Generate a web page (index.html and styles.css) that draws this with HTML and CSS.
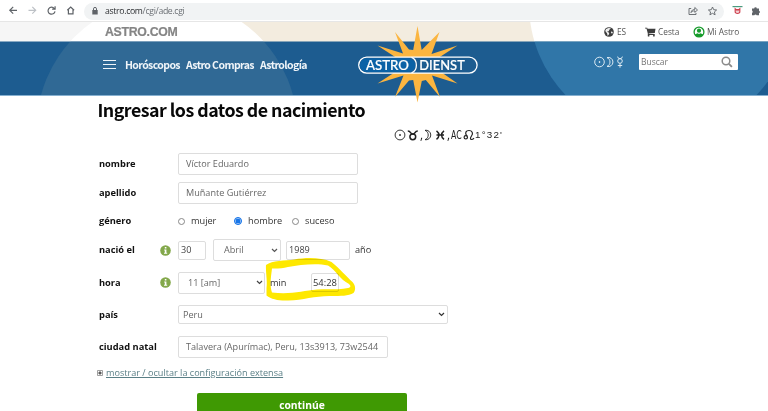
FILE: index.html
```html
<!DOCTYPE html>
<html lang="es">
<head>
<meta charset="utf-8">
<title>Astrodienst</title>
<link rel="stylesheet" href="styles.css">
</head>
<body>
<div class="browser">
  <svg class="b-nav" width="84" height="21" viewBox="0 0 84 21" fill="none" stroke="#5f6368" stroke-width="1.2">
    <path d="M17 10.3H9.8M13.2 6.9 9.8 10.3l3.4 3.4"/>
    <path stroke="#bdc1c6" d="M28.500 10.300h7.200M32.300 6.900l3.400 3.400-3.400 3.400"/>
    <path d="M54.300 8.500A3.500 3.500 0 1 0 55 11.300M55.100 6.300v2.900h-3"/>
    <path d="M67.300 10.200 70.700 7l3.400 3.200M68.400 9.500v4.300h4.600V9.500"/>
  </svg>
  <div class="address">
    <svg class="lock" width="6" height="8" viewBox="0 0 6 8"><path d="M.3 3h5.400v4.500H.3z" fill="#5f6368"/><path d="M1.500 3V1.900a1.500 1.500 0 0 1 3 0V3" fill="none" stroke="#5f6368"/></svg>
    <span class="url">astro.com<i>/cgi/ade.cgi</i></span>
    <svg class="addr-icons" width="30" height="12" viewBox="0 0 30 12" fill="none" stroke="#5f6368" stroke-width=".9">
      <path d="M3.200 3.500H1v6h7V8M3 7.600c.5-2.500 2-3.200 3.800-3.200V2.500L9.500 5 6.800 7.400V5.800C5 5.800 4 6.400 3 7.600z"/>
      <path d="m24.500 2 1.200 2.700 2.900.3-2.200 1.900.7 2.900-2.600-1.500-2.600 1.500.7-2.900-2.200-1.900 2.900-.3z"/>
    </svg>
  </div>
  <svg width="30" height="12" viewBox="0 0 30 12">
    <path d="M.5 1h10v1.200H.5z" fill="#4a9b7f"/>
    <path d="M3.200 3.700v3.100q0 1.500 2.300 1.500t2.300-1.500V3.700l-1.100.9H4.300z" fill="none" stroke="#cf4250" stroke-width="1.200"/><path d="M4 5.800h3" stroke="#cf4250" stroke-width=".8"/>
    <path d="M20 3.500h2.200a1.300 1.300 0 0 1 2.600 0H27v2.300a1.300 1.300 0 0 1 0 2.500v1.900h-2.300a1.300 1.300 0 0 0-2.400 0H20V8a1.400 1.400 0 0 0 0-2.400z" fill="#5f6368"/>
  </svg>
</div>

<header class="header">
  <svg class="backdrop" width="768" height="75" viewBox="0 21 768 75">
    <path d="M0 21h768v21H0z" fill="#f3ecdf"/><path d="M0 21h167v21H0z" fill="#f6f6f6"/>
    <path d="M0 41.500h768V96H0z" fill="#1d5c90"/>
    <clipPath id="top"><path d="M0 21h768v20.500H0z"/></clipPath>
    <clipPath id="bar"><path d="M0 41.500h768V96H0z"/></clipPath>
    <g clip-path="url(#top)" fill="#fff"><circle cx="167" cy="129" r="130.500"/><circle cx="661" cy="4" r="132"/></g>
    <g clip-path="url(#bar)"><circle cx="167" cy="129" r="130.500" fill="#306995"/><circle cx="661" cy="4" r="132" fill="#3076a8"/></g>
    <path d="M0 95h768v1H0z" fill="#86b0d0"/><path d="M0 21h768v1H0z" fill="#e6e6e6"/>
  </svg>
  <div class="topbar">
    <strong class="brand">ASTRO.COM</strong>
    <div class="top-item lang">
      <svg width="10" height="10" viewBox="0 0 10 10"><circle cx="5" cy="5" r="4.800" fill="#3d3d3d"/><path d="M4.600.900 7 1.200 5.500 2.500 4.700 4.200 3 4.500l2 1.200.2 1.200L3.700 9 3 6.300 1.200 4l.9-1.900zM7.500 4.300l1.400.9-.8 1.500-1.200-.9z" fill="#eee"/></svg>
      <span>ES</span>
    </div>
    <div class="top-item cart">
      <svg width="11" height="10" viewBox="0 0 11 10"><path d="M0 .7h2.200l.3 1h8L9.800 6 3.700 6.500v.6h6v.9H2.800V6.500L1.500 1.600H0z" fill="#3d3d3d"/><circle cx="3.600" cy="8.700" r=".9" fill="#3d3d3d"/><circle cx="8.900" cy="8.700" r=".9" fill="#3d3d3d"/></svg>
      <span>Cesta</span>
    </div>
    <div class="top-item user">
      <svg width="12" height="12" viewBox="0 0 12 12"><clipPath id="u"><circle cx="6" cy="6" r="5"/></clipPath><circle cx="6" cy="6" r="4.900" fill="#fff" stroke="#169b2b" stroke-width="1.300"/><g clip-path="url(#u)" fill="#169b2b"><circle cx="6" cy="4.700" r="2.100"/><path d="M1 12c0-3 1.800-4.300 3.500-4.700L6 8l1.500-.7C9.200 7.700 11 9 11 12z"/></g></svg>
      <span>Mi Astro</span>
    </div>
  </div>
  <nav class="nav">
    <div class="burger"><b></b><b></b><b></b></div>
    <a class="n1">Horóscopos</a><a class="n2">Astro Compras</a><a class="n3">Astrología</a>
    <svg class="signs" width="30" height="14" viewBox="0 0 30 14" fill="none" stroke="#e3eef6" stroke-width=".95">
      <circle cx="5.500" cy="7" r="4.800"/><circle cx="5.500" cy="7" r=".5" fill="#fff"/>
      <path d="M13 2.600a4.600 4.600 0 1 1 0 8.800c4-1.500 4-7.300 0-8.800z"/>
      <circle cx="26" cy="6" r="2.300"/><path d="M23.600 1.600q.3 2.100 2.400 2.100t2.400-2.100M26 8.300v4.400M23.800 10.500h4.400"/>
    </svg>
    <div class="search"><span>Buscar</span><svg width="12" height="12" viewBox="0 0 12 12" fill="none" stroke="#8b8b8b"><circle cx="5" cy="5" r="3.800" stroke-width="1.500"/><path d="m7.900 7.900 3 3" stroke-width="1.900"/></svg></div>
  </nav>
  <svg class="logo" width="122" height="80" viewBox="357 25 122 80">
    <path fill="#fbb540" d="M417.500 26l4.200 24L439.500 32l-8 22 26-8.500-20 13v11l20 14-25.500-8L440 97l-14.200-17-4 1-4.300 21.500L413.200 80l-4.200.500L395 97l8.500-21.500-26 8 20-13v-12l-20-13 25.500 8L395 32l14 17.500 4.200.5z"/>
    <rect x="358.700" y="57.100" width="118.400" height="16" rx="8" fill="#1d5c90" stroke="#fff" stroke-width="1.300"/>
    <path d="M366.700 58.300h42q6.500 1.700 6.500 6.900t-6.500 6.900h-42a6.900 6.900 0 0 1 0-13.800z" fill="#0b62a6"/>
    <path d="M411.500 57.400c6.500 2.500 6.500 13 0 15.400" fill="none" stroke="#fff" stroke-width="1.300"/>
    <text x="366" y="69.500" textLength="43" lengthAdjust="spacingAndGlyphs">ASTRO</text><text x="419.300" y="69.500" textLength="45.500" lengthAdjust="spacingAndGlyphs">DIENST</text>
  </svg>
</header>

<main class="main">
  <h1><span>Ingresar los datos de nacimiento</span></h1>
  <div class="chart">
    <svg width="25" height="14" viewBox="0 0 25 14" fill="none" stroke="#222">
      <circle cx="6" cy="7" r="4.900" stroke-width=".9"/><circle cx="6" cy="7" r=".5" fill="#222"/>
      <circle cx="18.800" cy="8.800" r="2.900" stroke-width="1.500"/><path d="M13.800 3c3.500 0 2 3 5 3s1.500-3 5-3" stroke-width="1.500"/>
    </svg><span class="comma">,</span><svg width="22" height="14" viewBox="0 0 22 14" fill="none" stroke="#222">
      <path d="M1 2.300a4.800 4.800 0 1 1 0 9.400c4.300-1.600 4.300-7.800 0-9.400z" stroke-width=".9"/>
      <path d="M12.500 2.800c3.300 2.600 3.300 6 0 8.600M20 2.800c-3.300 2.600-3.300 6 0 8.600M12.500 7H20" stroke-width="1.500"/>
    </svg><span class="comma">,</span><span class="ac">AC</span><svg width="12" height="14" viewBox="0 0 12 14" fill="none" stroke="#222" stroke-width="1.200"><circle cx="2.800" cy="9.300" r="1.700"/><path d="M4 8C1.300 5 3 2.500 6 2.500s4.700 2.600 2.500 5.500c-1.500 2-1.300 3.500 0 3.500s1.900-.7 2.500-1.200"/></svg><span class="deg">1°32'</span>
  </div>

  <form class="form">
    <div class="row r1"><label>nombre</label><div class="box wide">Víctor Eduardo</div></div>
    <div class="row r2"><label>apellido</label><div class="box wide">Muñante Gutiérrez</div></div>
    <div class="row r3"><label>género</label><div class="radios">
      <span class="radio"></span><span class="t1">mujer</span>
      <span class="radio on"></span><span class="t2">hombre</span>
      <span class="radio"></span><span class="t3">suceso</span></div></div>
    <div class="row r4"><label>nació el</label><svg class="info" width="11" height="11" viewBox="0 0 11 11"><circle cx="5.500" cy="5.500" r="5.300" fill="#83a84b"/><path d="M4.800 2h1.600v1.500H4.800zM4.200 4.500h2.200v3.300h.8v1H4v-1h.8V5.500h-.6z" fill="#fff"/></svg>
      <div class="box day">30</div>
      <div class="box month">Abril<svg width="7" height="5" viewBox="0 0 7 5"><path d="m1 1 2.500 2.500L6 1" fill="none" stroke="#555" stroke-width="1.200"/></svg></div>
      <div class="box year">1989</div><span class="after">año</span></div>
    <div class="row r5"><label>hora</label><svg class="info" width="11" height="11" viewBox="0 0 11 11"><circle cx="5.500" cy="5.500" r="5.300" fill="#83a84b"/><path d="M4.800 2h1.600v1.500H4.800zM4.200 4.500h2.200v3.300h.8v1H4v-1h.8V5.500h-.6z" fill="#fff"/></svg>
      <div class="box hour">11 [am]<svg width="7" height="5" viewBox="0 0 7 5"><path d="m1 1 2.500 2.500L6 1" fill="none" stroke="#444" stroke-width="1.200"/></svg></div>
      <span class="min">min</span><div class="box minute">54:28</div>
      <svg class="marker" width="96" height="48" viewBox="262 256 96 48"><path fill="#fee800" fill-rule="evenodd" d="M266 265C265.500 273 267.500 279 266.500 288v7.500c5 4 13 5.500 22 5 15-.5 28-5 43-4.500 9 0 17 0 22-3 2.500-3 2-8-1-11-6-5-13-14-21-20-11-5-26-4.500-37-2.500-10 1.500-22 .5-28.500 5.500zM272 268.500C283 269 291 266 301 265c9-1 19-1.500 27 .5 8 5 12 14 21 18.500 2 2 2 3-1 4-9 2-20 1-31 1.500-14 1-26 5.500-45 3-2.500-7-1-16 0-24z"/></svg>
    </div>
    <div class="row r6"><label>país</label><div class="box country">Peru<svg width="7" height="5" viewBox="0 0 7 5"><path d="m1 1 2.500 2.500L6 1" fill="none" stroke="#333" stroke-width="1.200"/></svg></div></div>
    <div class="row r7"><label>ciudad natal</label><div class="box city"><span>Talavera (Apurímac), Peru, 13s3913, 73w2544</span></div></div>
    <div class="more"><svg width="6" height="6" viewBox="0 0 6 6"><path d="M.5.500h5v5h-5z" fill="#fff" stroke="#888" stroke-width=".8"/><path d="M1.300 3h3.400M3 1.300v3.400" stroke="#222"/></svg><a>mostrar / ocultar la configuración extensa</a></div>
    <div class="submit">continúe</div>
  </form>
</main>
</body>
</html>
```

FILE: styles.css
```css
* { box-sizing: border-box; }
body { margin: 0; width: 768px; height: 411px; overflow: hidden; background: #fff; font: 9.200px/14px "Open Sans", "Noto Sans", sans-serif; color: #333; }
svg { display: block; flex: none; }
span, a, label { white-space: nowrap; }

.browser { display: flex; align-items: center; height: 21px; background: #fff; }
.address { display: flex; align-items: center; width: 640px; height: 17px; margin: 1px 8px 0 0; padding-left: 8px; border-radius: 9px; background: #f1f3f4; }
.url { margin-left: 7px; font: 8.700px/16px "Open Sans", sans-serif; letter-spacing: -.33px; color: #2b2d30; }
.url i { font-style: normal; color: #6b6f74; }
.addr-icons { margin-left: auto; margin-right: 6px; }

.header { position: relative; height: 75px; }
.backdrop { position: absolute; inset: 0; }
.topbar { position: relative; display: flex; align-items: center; height: 21px; padding-left: 105px; font-size: 8.300px; color: #555; }
.brand { width: 499px; font: bold 12.3px/20px "Liberation Sans", sans-serif; letter-spacing: -.3px; color: #858585; -webkit-text-stroke: .2px #858585; }
.top-item { display: flex; align-items: center; gap: 3px; }
.lang { width: 41px; }
.cart { width: 48px; gap: 2px; }
.user { gap: 2px; }
.nav { position: relative; display: flex; align-items: center; height: 54px; padding: 0 0 7px 103px; font: bold 10.500px/16px "Noto Sans CJK SC", sans-serif; letter-spacing: -.6px; color: #f0f5f9; }
.burger { display: grid; gap: 3px; width: 13px; margin: 0 9px 2px 0; }
.burger b { height: 1.300px; background: #f0f5f9; }
.nav a { padding-bottom: 2px; }
.n1 { width: 61px; }
.n2 { width: 74px; }
.n3 { width: 334px; }
.signs { width: 30px; margin-bottom: 7px; }
.search { display: flex; align-items: center; justify-content: space-between; width: 99px; height: 16px; margin: 0 0 7px 15px; padding: 0 5px 0 2px; border-radius: 1px; background: #fff; font: 8.500px/14px "Open Sans", sans-serif; letter-spacing: 0; color: #777; }
.logo { position: absolute; left: 357px; top: 4px; z-index: 2; }
.logo text { font: 500 12.500px Lato, sans-serif; fill: #fff; stroke: #fff; stroke-width: .2px; }

h1 { height: 26px; margin: 0; padding: 0 0 0 97.500px; font: bold 17.800px/27px "Noto Sans CJK SC", sans-serif; letter-spacing: -.51px; color: #080808; }
.chart { display: flex; align-items: center; height: 25px; padding-left: 394px; color: #222; font-size: 12px; }
.comma { width: 5px; text-align: center; }
.ac { display: inline-block; width: 12px; font: 12px/14px "Liberation Sans Narrow", "DejaVu Sans Condensed", sans-serif; transform: scaleX(.72); transform-origin: left; }
.deg { font: 9.800px/14px "Liberation Sans", sans-serif; letter-spacing: 1.200px; }

.form { height: 264px; }
.row { position: relative; display: flex; align-items: center; padding-left: 99px; }
.row label { width: 79px; font-weight: bold; font-size: 9.300px; color: #111; }
.row .info { margin-left: -18px; margin-right: 7px; }
.box { display: flex; align-items: center; border: 1px solid #ddd; border-radius: 2px; background: #fff; color: #666; font-size: 9.100px; white-space: nowrap; }
.box svg { margin-left: auto; }
.wide { width: 180px; height: 22px; padding-left: 7px; }
.r1 { height: 33px; }
.r2 { height: 25px; }
.r3 { height: 32px; }
.r4 { height: 26px; }
.r5 { height: 39px; }
.r6 { height: 25px; }
.r7 { height: 40px; }
.radios { display: flex; align-items: center; }
.radio { width: 7px; height: 7px; border: 1px solid #888; border-radius: 50%; background: #fff; }
.radio.on { width: 8px; height: 8px; border-color: #1976e8; background: #1976e8; box-shadow: inset 0 0 0 .5px #fff; }
.t1 { width: 43px; margin-left: 6px; }
.t2 { width: 44px; margin-left: 6px; }
.t3 { margin-left: 6px; }
.day { width: 28px; height: 19px; padding-left: 2px; color: #444; }
.month { width: 68px; height: 22px; margin-left: 7px; padding: 0 2px 0 10px; }
.year { width: 64px; height: 19px; margin-left: 5px; padding-left: 2px; color: #444; }
.after { margin-left: 5px; }
.hour { width: 87px; height: 22px; padding: 0 1px 0 9px; }
.min { width: 41px; margin-left: 5px; }
.minute { width: 28px; height: 19px; padding-left: 1px; font-size: 9.400px; color: #333; }
.marker { position: absolute; left: 262px; top: -7px; mix-blend-mode: multiply; }
.country { width: 270px; height: 19px; padding: 0 2px 0 4px; }
.city { width: 210px; height: 22px; padding-left: 7px; }
.more { display: flex; align-items: center; gap: 3px; height: 12px; padding-left: 97px; font-size: 9.100px; color: #5a7f86; }
.more a { text-decoration: underline; }
.submit { width: 210px; height: 26px; margin: 14px 0 0 197px; border-radius: 2px; background: #3f9903; color: #fff; text-align: center; font: bold 10.300px/24px "Open Sans", sans-serif; }
```
